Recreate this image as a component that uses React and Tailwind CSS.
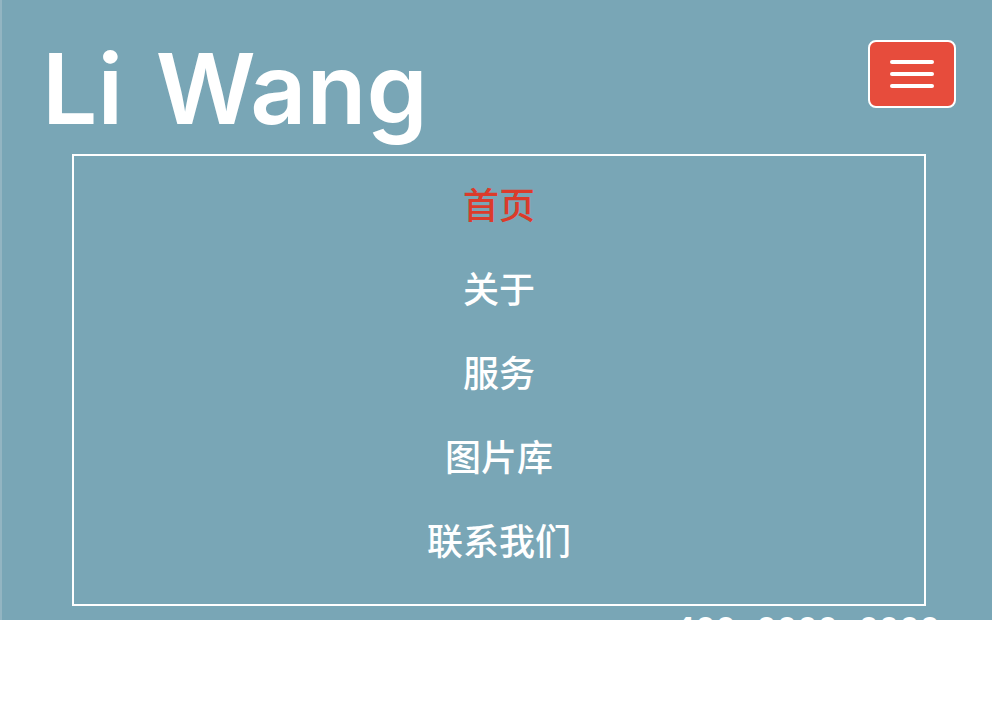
const links = ["首页", "关于", "服务", "图片库", "联系我们"];

export default function App() {
  return (
    <div className="min-h-screen bg-white font-['Liberation_Sans','Noto_Sans_CJK_SC',sans-serif]">
      <header className="h-[620px] overflow-hidden border-l-2 border-[#93b5c2] bg-[#79a6b6] text-white">
        <div className="flex items-start justify-between pt-10 pr-9 pl-10">
          <h1 className="font-['Inter',sans-serif] text-[98px] leading-[98px] font-semibold">
            Li <span className="ml-2">Wang</span>
          </h1>
          <button
            type="button"
            aria-label="Menu"
            aria-expanded="true"
            className="flex h-[68px] w-22 flex-col items-center justify-center gap-2 rounded-lg border-2 border-white bg-[#e74c3c]"
          >
            <span className="h-1 w-11 rounded-sm bg-white" />
            <span className="h-1 w-11 rounded-sm bg-white" />
            <span className="h-1 w-11 rounded-sm bg-white" />
          </button>
        </div>
        <nav className="mt-4 mr-[66px] ml-[70px] border-2 border-white pt-[9px] pb-[19px]">
          <ul>
            {links.map((label, i) => (
              <li key={label}>
                <a
                  href="#"
                  className={`block py-5 text-center text-4xl leading-[44px] font-medium ${i === 0 ? "text-[#dc3b2b]" : "text-white"}`}
                >
                  {label}
                </a>
              </li>
            ))}
          </ul>
        </nav>
        <p className="mt-1 mr-[52px] text-right font-['Liberation_Mono',monospace] text-[34px] leading-10 font-bold">400-0000-0000</p>
      </header>
    </div>
  );
}
